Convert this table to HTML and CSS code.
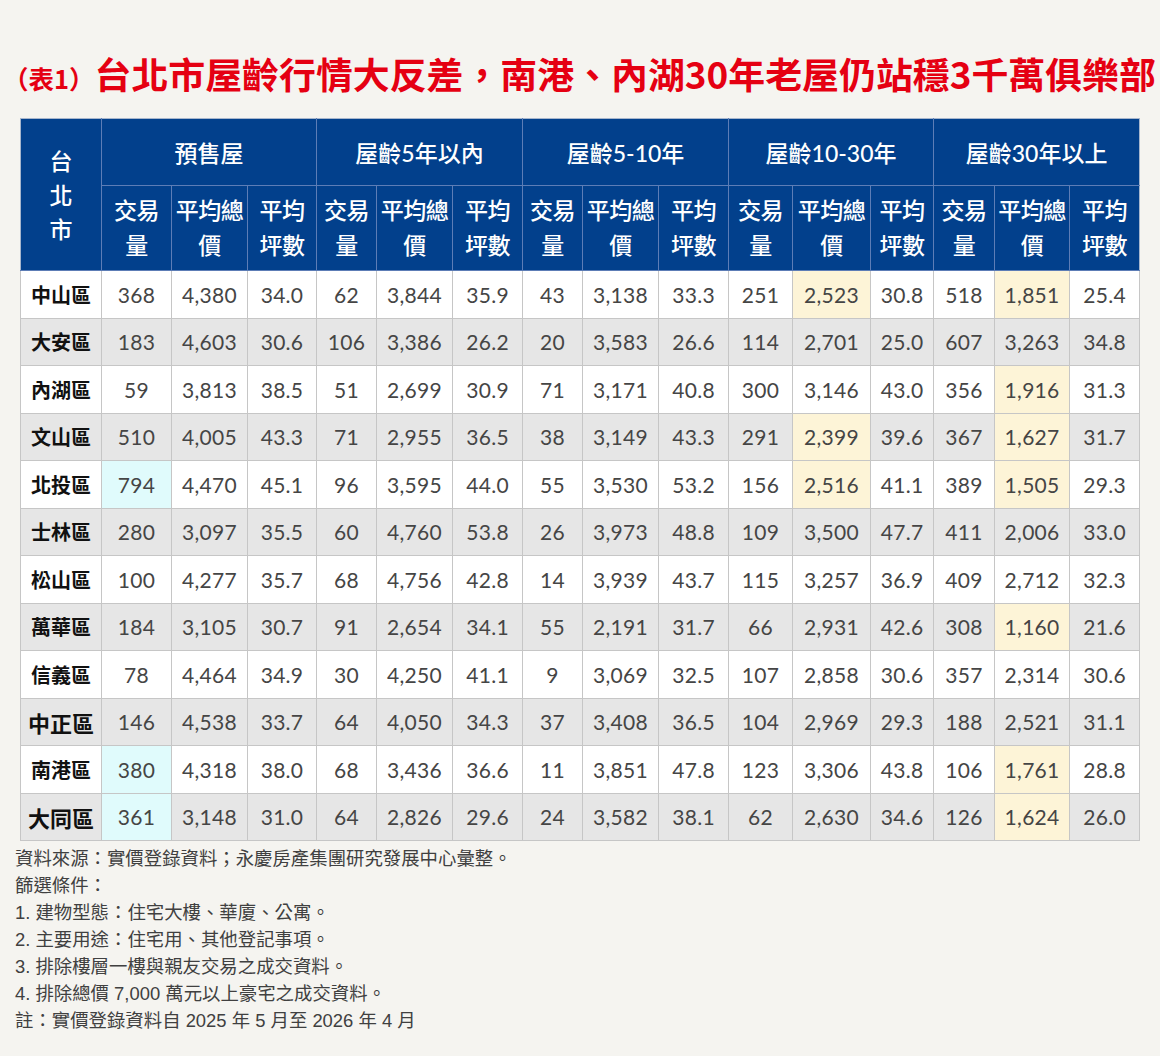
FILE: index.html
```html
<!DOCTYPE html>
<html lang="zh-Hant">
<head>
<meta charset="utf-8">
<title>台北市屋齡行情</title>
<link rel="stylesheet" href="styles.css">
</head>
<body>
<div class="page">
  <h1 class="title"><span class="tag">（表1）</span>台北市屋齡行情大反差，南港、內湖30年老屋仍站穩3千萬俱樂部</h1>
  <table class="grid">
    <colgroup>
      <col class="c-dist">
      <col class="c-a"><col class="c-b"><col class="c-c">
      <col class="c-d"><col class="c-e"><col class="c-f">
      <col class="c-g"><col class="c-h"><col class="c-i">
      <col class="c-j"><col class="c-k"><col class="c-l">
      <col class="c-m"><col class="c-n"><col class="c-o">
    </colgroup>
    <thead>
      <tr class="h-group">
        <th rowspan="2" class="h-city">台<br>北<br>市</th>
        <th colspan="3">預售屋</th>
        <th colspan="3">屋齡5年以內</th>
        <th colspan="3">屋齡5-10年</th>
        <th colspan="3">屋齡10-30年</th>
        <th colspan="3">屋齡30年以上</th>
      </tr>
      <tr class="h-sub">
        <th>交易<br>量</th><th>平均總<br>價</th><th>平均<br>坪數</th>
        <th>交易<br>量</th><th>平均總<br>價</th><th>平均<br>坪數</th>
        <th>交易<br>量</th><th>平均總<br>價</th><th>平均<br>坪數</th>
        <th>交易<br>量</th><th>平均總<br>價</th><th>平均<br>坪數</th>
        <th>交易<br>量</th><th>平均總<br>價</th><th>平均<br>坪數</th>
      </tr>
    </thead>
    <tbody>
      <tr><th>中山區</th><td>368</td><td>4,380</td><td>34.0</td><td>62</td><td>3,844</td><td>35.9</td><td>43</td><td>3,138</td><td>33.3</td><td>251</td><td class="hl-y">2,523</td><td>30.8</td><td>518</td><td class="hl-y">1,851</td><td>25.4</td></tr>
      <tr><th>大安區</th><td>183</td><td>4,603</td><td>30.6</td><td>106</td><td>3,386</td><td>26.2</td><td>20</td><td>3,583</td><td>26.6</td><td>114</td><td>2,701</td><td>25.0</td><td>607</td><td>3,263</td><td>34.8</td></tr>
      <tr><th>內湖區</th><td>59</td><td>3,813</td><td>38.5</td><td>51</td><td>2,699</td><td>30.9</td><td>71</td><td>3,171</td><td>40.8</td><td>300</td><td>3,146</td><td>43.0</td><td>356</td><td class="hl-y">1,916</td><td>31.3</td></tr>
      <tr><th>文山區</th><td>510</td><td>4,005</td><td>43.3</td><td>71</td><td>2,955</td><td>36.5</td><td>38</td><td>3,149</td><td>43.3</td><td>291</td><td class="hl-y">2,399</td><td>39.6</td><td>367</td><td class="hl-y">1,627</td><td>31.7</td></tr>
      <tr><th>北投區</th><td class="hl-c">794</td><td>4,470</td><td>45.1</td><td>96</td><td>3,595</td><td>44.0</td><td>55</td><td>3,530</td><td>53.2</td><td>156</td><td class="hl-y">2,516</td><td>41.1</td><td>389</td><td class="hl-y">1,505</td><td>29.3</td></tr>
      <tr><th>士林區</th><td>280</td><td>3,097</td><td>35.5</td><td>60</td><td>4,760</td><td>53.8</td><td>26</td><td>3,973</td><td>48.8</td><td>109</td><td>3,500</td><td>47.7</td><td>411</td><td>2,006</td><td>33.0</td></tr>
      <tr><th>松山區</th><td>100</td><td>4,277</td><td>35.7</td><td>68</td><td>4,756</td><td>42.8</td><td>14</td><td>3,939</td><td>43.7</td><td>115</td><td>3,257</td><td>36.9</td><td>409</td><td>2,712</td><td>32.3</td></tr>
      <tr><th>萬華區</th><td>184</td><td>3,105</td><td>30.7</td><td>91</td><td>2,654</td><td>34.1</td><td>55</td><td>2,191</td><td>31.7</td><td>66</td><td>2,931</td><td>42.6</td><td>308</td><td class="hl-y">1,160</td><td>21.6</td></tr>
      <tr><th>信義區</th><td>78</td><td>4,464</td><td>34.9</td><td>30</td><td>4,250</td><td>41.1</td><td>9</td><td>3,069</td><td>32.5</td><td>107</td><td>2,858</td><td>30.6</td><td>357</td><td>2,314</td><td>30.6</td></tr>
      <tr><th class="big">中正區</th><td>146</td><td>4,538</td><td>33.7</td><td>64</td><td>4,050</td><td>34.3</td><td>37</td><td>3,408</td><td>36.5</td><td>104</td><td>2,969</td><td>29.3</td><td>188</td><td>2,521</td><td>31.1</td></tr>
      <tr><th>南港區</th><td class="hl-c">380</td><td>4,318</td><td>38.0</td><td>68</td><td>3,436</td><td>36.6</td><td>11</td><td>3,851</td><td>47.8</td><td>123</td><td>3,306</td><td>43.8</td><td>106</td><td class="hl-y">1,761</td><td>28.8</td></tr>
      <tr><th class="big">大同區</th><td class="hl-c">361</td><td>3,148</td><td>31.0</td><td>64</td><td>2,826</td><td>29.6</td><td>24</td><td>3,582</td><td>38.1</td><td>62</td><td>2,630</td><td>34.6</td><td>126</td><td class="hl-y">1,624</td><td>26.0</td></tr>
    </tbody>
  </table>
  <div class="notes">
    <p>資料來源：實價登錄資料；永慶房產集團研究發展中心彙整。</p>
    <p>篩選條件：</p>
    <p>1. 建物型態：住宅大樓、華廈、公寓。</p>
    <p>2. 主要用途：住宅用、其他登記事項。</p>
    <p>3. 排除樓層一樓與親友交易之成交資料。</p>
    <p>4. 排除總價 7,000 萬元以上豪宅之成交資料。</p>
    <p>註：實價登錄資料自 2025 年 5 月至 2026 年 4 月</p>
  </div>
</div>
</body>
</html>
```
FILE: styles.css
```css
html, body {
  margin: 0;
  padding: 0;
  background: #f5f4f0;
}

.page {
  width: 1160px;
  height: 1056px;
  box-sizing: border-box;
  overflow: hidden;
}

.title {
  margin: 0 0 23px 0;
  padding: 51px 0 0 3px;
  height: 44px;
  line-height: 44px;
  font-family: "Noto Sans CJK TC", "Noto Sans CJK SC", sans-serif;
  font-weight: 700;
  font-size: 36.9px;
  color: #e50012;
  white-space: nowrap;
  letter-spacing: 0;
}

.title .tag {
  font-size: 25.5px;
  font-weight: 700;
}

.grid {
  margin-left: 20px;
  width: 1119px;
  table-layout: fixed;
  border-collapse: collapse;
  font-family: Lato, "Noto Sans CJK TC", sans-serif;
}

.c-dist { width: 81px; }
.c-a { width: 70px; } .c-b { width: 76px; } .c-c { width: 69px; }
.c-d { width: 60px; } .c-e { width: 76px; } .c-f { width: 70px; }
.c-g { width: 60px; } .c-h { width: 76px; } .c-i { width: 70px; }
.c-j { width: 64px; } .c-k { width: 78px; } .c-l { width: 63px; }
.c-m { width: 61px; } .c-n { width: 75px; } .c-o { width: 70px; }

.grid thead th {
  background: #02408c;
  color: #ffffff;
  font-family: Lato, "Noto Sans CJK TC", sans-serif;
  font-weight: 500;
  font-size: 23px;
  border: 1px solid #5d7db6;
  padding: 0;
  text-align: center;
  vertical-align: middle;
  white-space: nowrap;
}

.grid thead tr.h-group th {
  border-top-color: #a7b6cd;
}

.grid thead th:first-child {
  border-left-color: #a7b6cd;
}

.grid thead th:last-child {
  border-right-color: #a7b6cd;
}

.h-group {
  height: 67px;
}

.h-sub {
  height: 85px;
}

.h-sub th {
  line-height: 35px;
  letter-spacing: -0.5px;
}

.h-city {
  line-height: 34px;
}

.grid tbody tr {
  height: 47.5px;
  background: #ffffff;
}

.grid tbody tr:nth-child(even) {
  background: #e6e6e6;
}

.grid tbody td,
.grid tbody th {
  border: 1px solid #c6c6c6;
  padding: 0;
  text-align: center;
  vertical-align: middle;
}

.grid tbody td {
  font-family: Lato, sans-serif;
  font-size: 21px;
  font-weight: 400;
  color: #454545;
  letter-spacing: 0.3px;
}

.grid tbody th {
  font-family: "Noto Sans CJK TC", sans-serif;
  font-weight: 700;
  font-size: 20px;
  color: #111111;
}

.grid tbody th.big {
  font-size: 22px;
}

.grid tbody td.hl-y {
  background: #fdf4d7;
}

.grid tbody td.hl-c {
  background: #e0fbfc;
}

.notes {
  margin-top: 4px;
  padding-left: 15px;
  font-family: "Liberation Sans", "Noto Sans CJK TC", sans-serif;
  font-size: 18.4px;
  line-height: 27px;
  color: #404040;
}

.notes p {
  margin: 0;
}
```
